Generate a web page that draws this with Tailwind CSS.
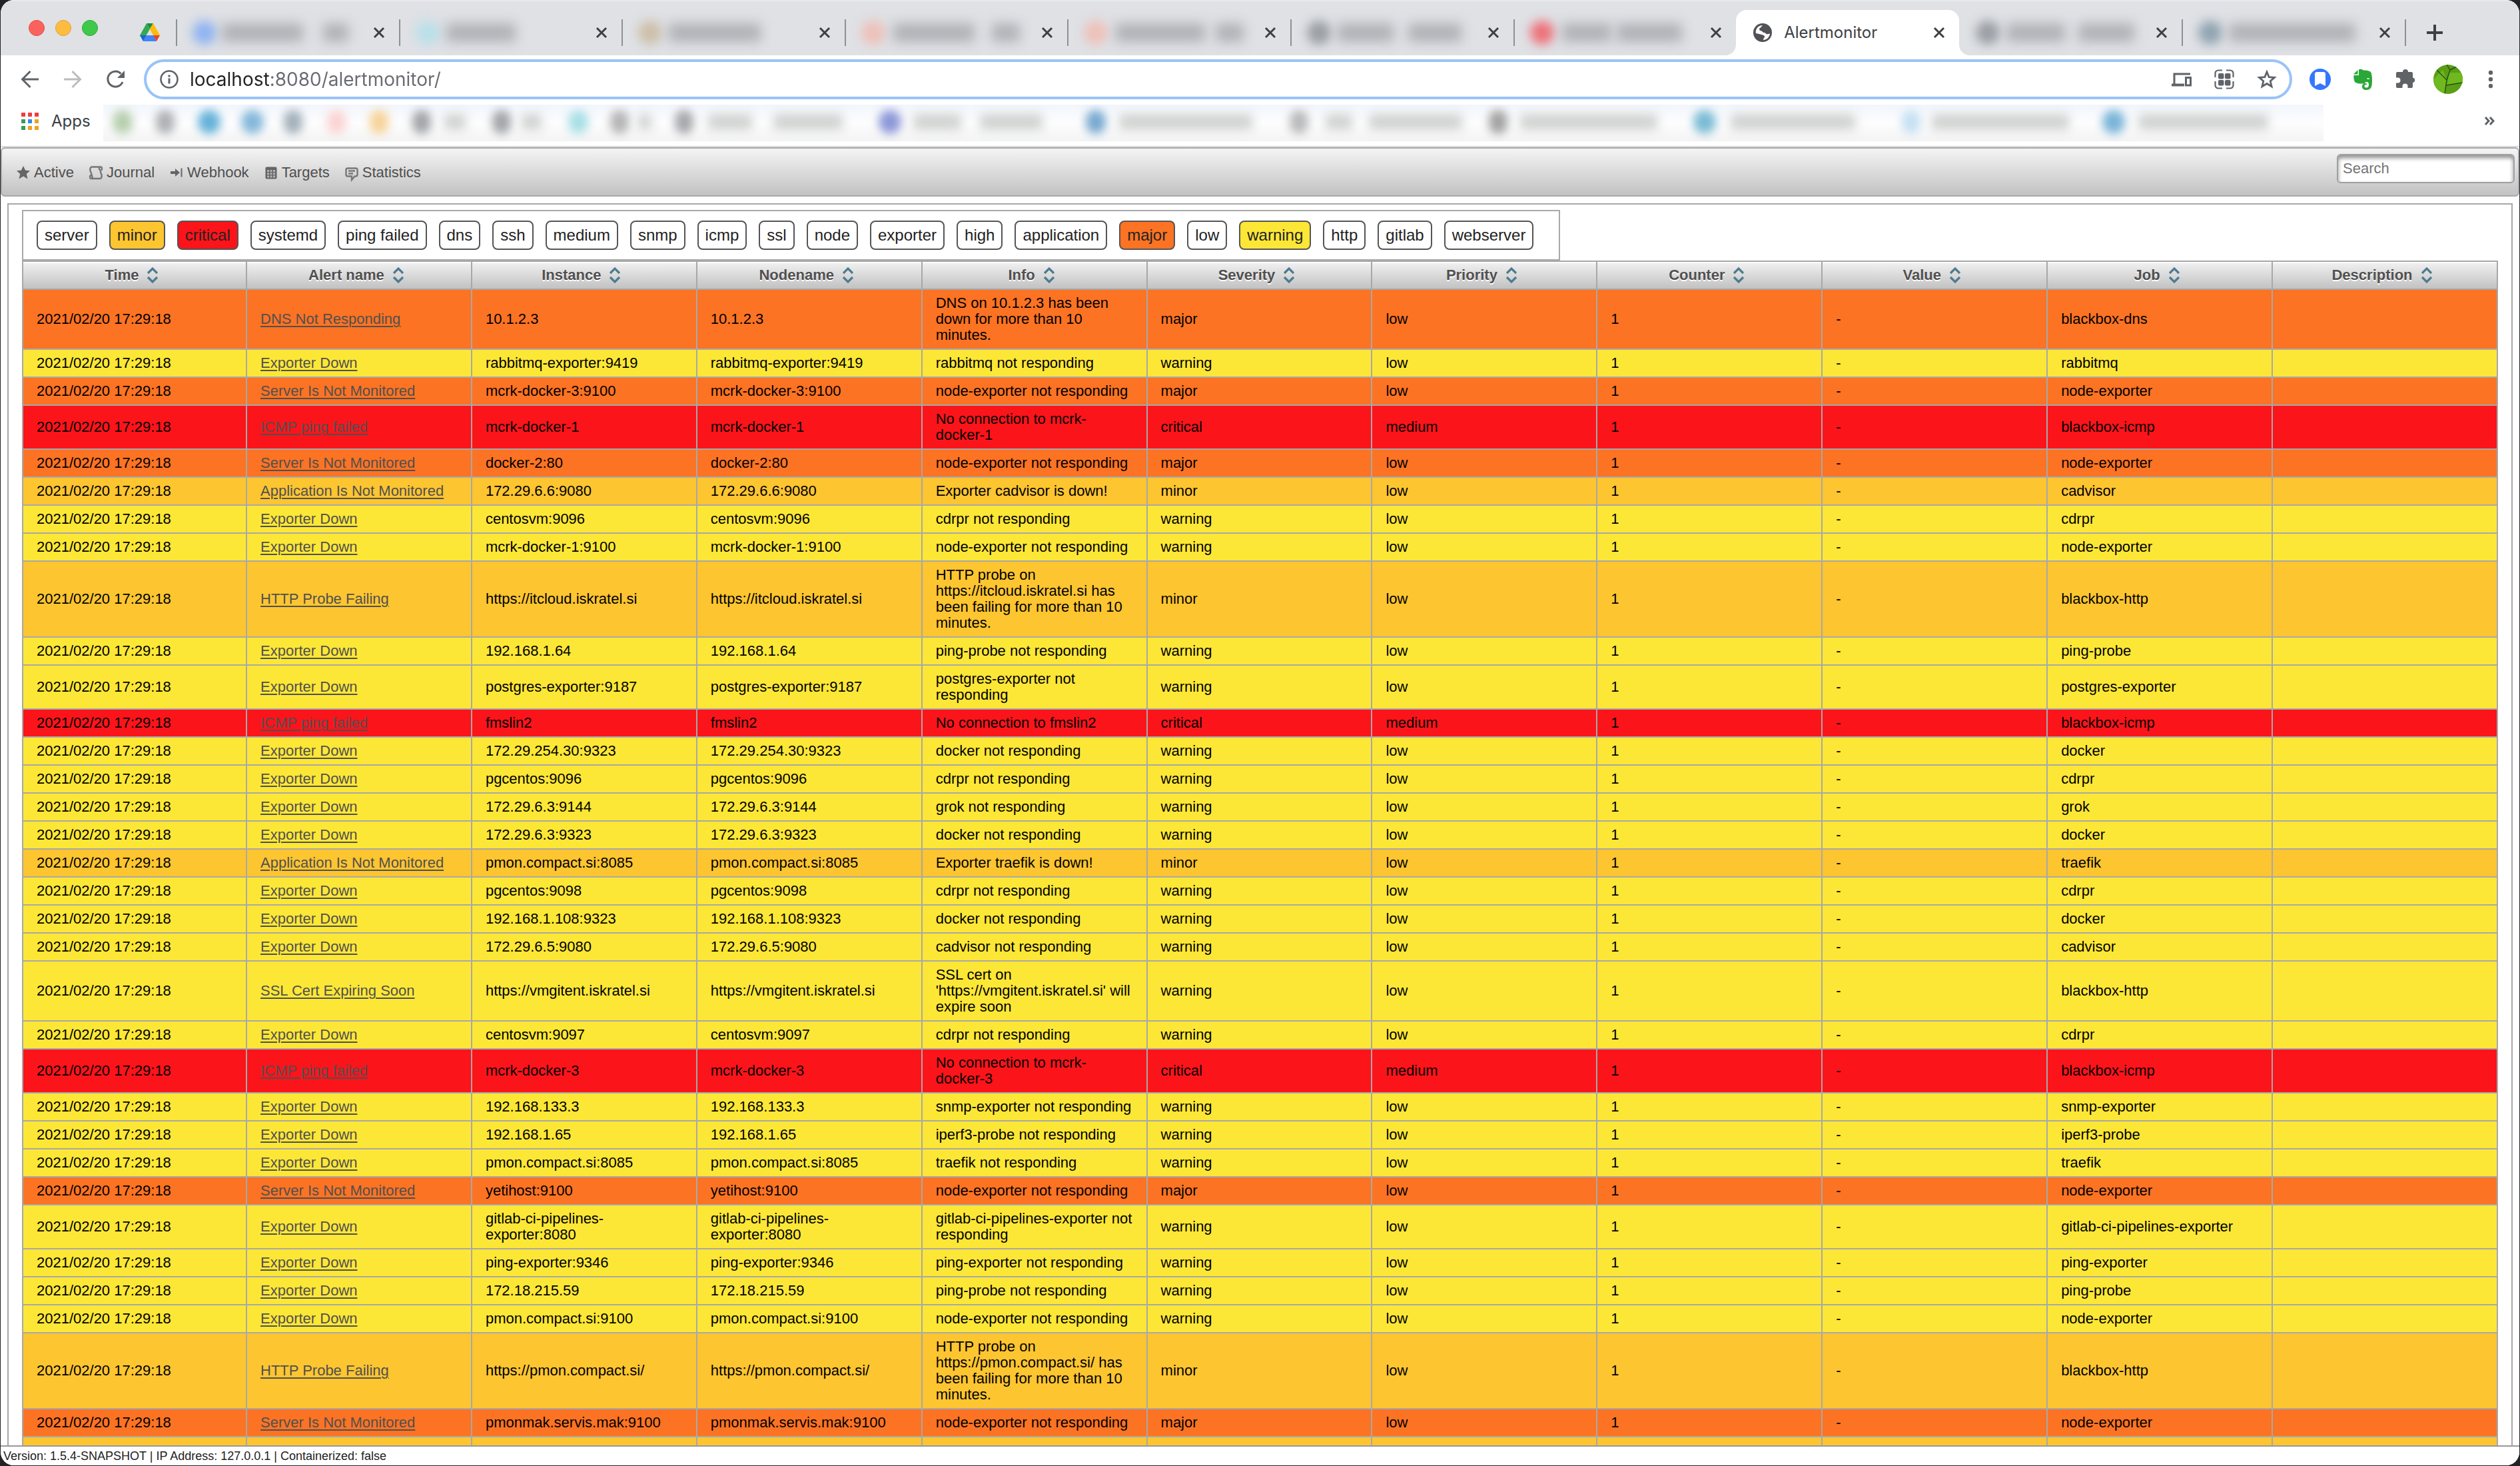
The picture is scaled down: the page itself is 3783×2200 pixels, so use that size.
<!DOCTYPE html>
<html lang="en">
<head>
<meta charset="utf-8">
<title>Alertmonitor</title>
<script src="https://cdn.jsdelivr.net/npm/@tailwindcss/browser@4"></script>
</head>
<body class="bg-[#222326]">
<svg class="hidden">
  <symbol id="close" viewBox="0 0 18 18"><path d="M2 2l14 14M16 2L2 16" stroke="#3c4043" stroke-width="3" fill="none"/></symbol>
  <symbol id="sort" viewBox="0 0 18 24"><path d="M2 9l7-7 7 7M2 15l7 7 7-7" stroke="#4f7b91" stroke-width="3.2" fill="none"/></symbol>
</svg>
<div class="ml-px mr-px flex h-[calc(100vh-1px)] flex-col overflow-hidden rounded-[20px] bg-white font-['Liberation_Sans',Arial,sans-serif] text-[22px] leading-6 text-black">

  <!-- Tab strip -->
  <header class="flex h-[83px] shrink-0 items-end border-t-2 border-[#e8eaed] bg-[#dfe1e5] font-[Inter,sans-serif]">
    <div class="flex w-[263px] shrink-0 self-start pl-[42px]">
      <div class="mt-7 flex gap-4">
        <span class="size-6 rounded-full border border-[#e24b41] bg-[#fc625d]"></span>
        <span class="size-6 rounded-full border border-[#dfa13a] bg-[#fdbc40]"></span>
        <span class="size-6 rounded-full border border-[#2bab2f] bg-[#3fc84a]"></span>
      </div>
      <svg class="mt-8 ml-[63px] h-7 w-[30px]" viewBox="0 0 30 28">
        <path d="M10 1h10l-5 8.500z" fill="#1e8e3e"/>
        <path d="M10 1l5 8.500L5 27 0 19z" fill="#34a853"/>
        <path d="M20 1l10 18H20l-5-9.500z" fill="#fbbc04"/>
        <path d="M0 19h10l-5 9z" fill="#1967d2"/>
        <path d="M9.500 19h11L25 28H5z" fill="#4285f4"/>
        <path d="M20 19h10l-5 9z" fill="#ea4335"/>
      </svg>
    </div>
    <div id="tabs" class="grid flex-1 grid-cols-10"></div>
    <div class="flex h-17 w-[172px] shrink-0 items-center">
      <span class="h-10 w-0.5 bg-[#8d9094]"></span>
      <button type="button" aria-label="New tab" class="ml-[31px]"><svg class="size-6" viewBox="0 0 24 24"><path d="M12 0v24M0 12h24" stroke="#3c4043" stroke-width="4"/></svg></button>
    </div>
  </header>

  <!-- Address bar -->
  <div class="flex h-18 shrink-0 items-center pr-[27px] pl-7 font-[Inter,sans-serif]">
    <div class="flex gap-8">
      <button type="button" aria-label="Back"><svg class="size-8" viewBox="0 0 32 32" fill="none" stroke="#5f6368" stroke-width="3"><path d="M29 16H5M16.500 4L4.500 16l12 12"/></svg></button>
      <button type="button" aria-label="Forward"><svg class="size-8" viewBox="0 0 32 32" fill="none" stroke="#babcbe" stroke-width="3"><path d="M3 16h24M15.500 4l12 12-12 12"/></svg></button>
      <button type="button" aria-label="Reload"><svg class="size-8" viewBox="0 0 32 32" fill="none"><path d="M24.500 7.500A11.500 11.500 0 1 0 27 20" stroke="#5f6368" stroke-width="3"/><path d="M30 3v11H19z" fill="#5f6368"/></svg></button>
    </div>
    <div class="ml-[27px] flex h-15 flex-1 items-center rounded-full border-4 border-[#99c3f9] pr-[18px] pl-5">
      <svg class="size-7" viewBox="0 0 28 28"><circle cx="14" cy="14" r="12.500" fill="none" stroke="#5f6368" stroke-width="2.600"/><path d="M14 12.500v8M14 7.500v3" stroke="#5f6368" stroke-width="3"/></svg>
      <input type="text" aria-label="Address" value="localhost:8080/alertmonitor/" class="ml-[17px] h-10 flex-1 bg-[linear-gradient(90deg,#202124_121px,#686b6f_121px)] bg-clip-text text-[28px] text-transparent outline-none">
      <div class="flex gap-8">
        <svg class="size-8" viewBox="0 0 32 32" fill="none" stroke="#5f6368" stroke-width="3"><path d="M5 24V8h24"/><path d="M1 24.500h19" stroke-width="4"/><rect x="22.500" y="13.500" width="7" height="11.500"/></svg>
        <svg class="size-8" viewBox="0 0 32 32" fill="none" stroke="#5f6368" stroke-width="2.200"><path d="M13 2.500H7A4.500 4.500 0 0 0 2.500 7v6M19 2.500h6A4.500 4.500 0 0 1 29.500 7v6M13 29.500H7A4.500 4.500 0 0 1 2.500 25v-6M19 29.500h6a4.500 4.500 0 0 0 4.500-4.500v-6"/><g fill="#5f6368" stroke="none"><rect x="7" y="7" width="8.500" height="8.500" rx="2"/><rect x="17" y="7" width="8.500" height="8.500" rx="2"/><rect x="7" y="17" width="8.500" height="8.500" rx="2"/><rect x="17" y="17" width="8.500" height="8.500" rx="2"/></g></svg>
        <svg class="size-8" viewBox="0 0 32 32" fill="none" stroke="#5f6368" stroke-width="2.800"><path d="M16 5l3.200 7.700 8.200.700-6.200 5.400 1.900 8-7.100-4.300-7.100 4.300 1.900-8L4.600 13.400l8.200-.700z"/></svg>
      </div>
    </div>
    <div class="ml-[26px] flex items-center">
      <svg class="size-8" viewBox="0 0 32 32"><circle cx="16" cy="16" r="16" fill="#3377ff"/><path d="M8 8q0-3 3-3h10q3 0 3 3v18l-8-4-8 4z" fill="#fff"/></svg>
      <svg class="ml-8 size-8" viewBox="0 0 32 32"><path d="M2.500 10h7.500V1.500C11 0 15 .500 17 2.500c4 0 9 .500 11 2.500 2 4 2.500 12 1.500 20-.700 4.500-3.500 7-8 7-4 0-6.500-2-6.500-5s2-5 5-5c1.500 0 2.500.500 2.500 2-3-.500-4 .500-4 2.500 0 1.500 1 2 3 2 2.500 0 3.500-1.500 3.500-4.500 0-2.500-1-4-3-4-2 0-3 2-5 2.500C11 23 5 22 3.500 19 2.500 16 2 13 2.500 10z" fill="#2aa737"/><path d="M2 8.500L8.500 2v6.500z" fill="#2aa737"/><path d="M22 15.500c1-2 3.500-2 4 .500z" fill="#fff"/></svg>
      <svg class="ml-8 size-8" viewBox="0 0 32 32"><path d="M13 6a4 4 0 0 1 8 0h5q2 0 2 2v6.500a3.800 3.800 0 0 1 0 7.500v6q0 2-2 2h-5.500v-2.500a4 4 0 0 0-8 0V30H5q-2 0-2-2v-5.500h2.500a4 4 0 0 0 0-8H3V8q0-2 2-2z" transform="translate(-1 -1)" fill="#5f6368"/></svg>
      <svg class="ml-[26px] size-11 rounded-full" viewBox="0 0 44 44"><rect width="44" height="44" fill="#5a9e17"/><path d="M0 22L14 8l6 15-3 21H0zM24 12l20 0v16l-24 3z" fill="#6fb81f"/><path d="M20 0l5 8-5 15-3 21M5 8l15 15M25 8l12-6M19 31l25-4" stroke="#23520c" stroke-width="1.400" fill="none"/></svg>
      <button type="button" aria-label="Menu" class="ml-[26px]"><svg class="size-8" viewBox="0 0 32 32" fill="#5f6368"><circle cx="16" cy="6" r="3.200"/><circle cx="16" cy="16" r="3.200"/><circle cx="16" cy="26" r="3.200"/></svg></button>
    </div>
  </div>

  <!-- Bookmarks bar -->
  <div class="flex h-16 shrink-0 items-center pb-[10px] pl-[31px] font-[Inter,sans-serif]">
    <svg class="h-7 w-[26px]" viewBox="0 0 26 28"><g fill="#f23c3c"><path d="M0 1h6v6H0zM10 1h6v6h-6zM20 1h6v6h-6z"/></g><g fill="#3c9a57"><path d="M0 11h6v6H0zM0 21h6v6H0z"/></g><path d="M10 11h6v6h-6z" fill="#2b8cf2"/><g fill="#f0a026"><path d="M20 11h6v6h-6zM10 21h6v6h-6zM20 21h6v6h-6z"/></g></svg>
    <a href="#apps" class="ml-[19px] w-[78px] text-[24px] text-[#3c4043]">Apps</a>
    <div id="bookmarks" class="mt-[5px] flex h-[55px] w-[3333px] min-w-0 shrink items-center overflow-hidden bg-linear-to-b from-[#f2f6fc] via-[#fdfdfe] to-[#f4f4f4] pb-1"></div>
    <button type="button" aria-label="More bookmarks" class="mr-[37px] ml-auto"><svg class="h-4 w-4" viewBox="0 0 16 16" fill="none" stroke="#5f6368" stroke-width="3"><path d="M2 2l5 5.500L2 13M9 2l5 5.500L9 13"/></svg></button>
  </div>

  <!-- Application menu -->
  <nav class="flex h-[76px] shrink-0 border-t-2 border-[#d8dadf]">
    <div class="flex flex-1 rounded-md border-2 border-[#a8a8a8] bg-linear-to-b from-[#f4f4f4] to-[#c2c2c2] pr-[5px] pl-4 text-[#4f4f4f]">
      <ul class="flex items-center gap-[17px] pt-0.5">
        <li><a href="#active" class="flex items-center"><svg class="size-8" viewBox="0 0 32 32" fill="#656467"><path d="M16 6l3 6.500 7 .800-5.200 4.700 1.700 7.500-6.500-4-6.500 4 1.700-7.500L6 13.300l7-.800z"/></svg>Active</a></li>
        <li><a href="#journal" class="flex items-center"><svg class="size-8" viewBox="0 0 32 32" fill="none" stroke="#777679" stroke-width="2.400"><path d="M10 7.500h13q2 0 2 2.500t-2.500 2.500q0 2.500 1.500 5.500t0 6q-.500 1-2 1H9q-2 0-2-2.500T9.500 20q0-3-1.500-5.500t0-6q.500-1 2-1z"/><path d="M21 8v4M10 20l1 5"/></svg>Journal</a></li>
        <li><a href="#webhook" class="flex items-center"><svg class="size-8" viewBox="0 0 32 32"><path d="M7 14h7v-4l7 6-7 6v-4H7z" fill="#656467"/><path d="M23.500 9.500v13" stroke="#656467" stroke-width="2"/></svg>Webhook</a></li>
        <li><a href="#targets" class="flex items-center"><svg class="size-8" viewBox="0 0 32 32"><rect x="7.500" y="7.500" width="17" height="18" rx="2" fill="#656467"/><path d="M10 12h3v3h-3zM14.500 12h3v3h-3zM19 12h3v3h-3zM10 16.200h3v3h-3zM14.500 16.200h3v3h-3zM19 16.200h3v3h-3zM10 20.400h3v3h-3zM14.500 20.400h3v3h-3zM19 20.400h3v3h-3z" fill="#b3b3b3"/></svg>Targets</a></li>
        <li><a href="#statistics" class="flex items-center"><svg class="size-8" viewBox="0 0 32 32" fill="none" stroke="#777679" stroke-width="2.400"><path d="M10 9.500h12q2.500 0 2.500 2.500v7q0 2.500-2.500 2.500h-1.500L16 27v-5.500h-6q-2.500 0-2.500-2.500v-7q0-2.500 2.500-2.500zM11 13.500h10M11 17.500h7"/></svg>Statistics</a></li>
      </ul>
      <input type="search" placeholder="Search" aria-label="Search" class="mt-2 ml-auto h-11 w-[267px] rounded-md border-2 border-[#a0a0a0] bg-white px-[7px] shadow-[inset_0_4px_6px_#8d8d8d] placeholder:text-[#757575]">
    </div>
  </nav>

  <!-- Alerts -->
  <main class="min-h-0 flex-1 overflow-hidden px-[10px] pt-[10px]">
    <div class="border-2 border-[#a8a8a8] px-5 pt-2 pb-5">
      <div id="filters" class="flex h-19 w-fit items-center gap-[18px] border-2 border-[#a8a8a8] pr-[38px] pl-5 text-[24px] text-[#222]"></div>
      <table class="w-full table-fixed border-collapse">
        <colgroup><col class="w-[336px]"><col span="10"></colgroup>
        <thead><tr id="head"></tr></thead>
        <tbody id="rows"></tbody>
      </table>
    </div>
  </main>

  <footer class="shrink-0 border-t-2 border-[#999] bg-white pt-0.5 pb-0.5 pl-1 text-[18px] leading-6 text-[#222]">Version: 1.5.4-SNAPSHOT | IP Address: 127.0.0.1 | Containerized: false</footer>
</div>

<script>
const $ = id => document.getElementById(id);

// Browser tabs: favicon colour, then [gap, width] of each word of the obscured title.
const tabs = [
  ['#8fb3f2', [[12, 118], [34, 34]]], ['#b9dfe9', [[14, 100]]], ['#cdbfa9', [[14, 134]]],
  ['#eec0b8', [[16, 118], [30, 38]]], ['#eec0b8', [[16, 130], [20, 38]]], ['#9a9ea4', [[14, 80], [26, 76]]],
  ['#ee7078', [[16, 70], [12, 94]]], null, ['#9a9ea4', [[14, 84], [24, 80]]], ['#8fa3b0', [[14, 186]]],
];
$('tabs').innerHTML = tabs.map((t, i) => {
  const close = '<button type="button" aria-label="Close tab" class="mr-[21px] ml-auto shrink-0"><svg class="size-[18px]"><use href="#close"/></svg></button>';
  if (!t) return `<div class="relative flex h-17 items-center rounded-t-2xl bg-white pl-[26px]">
    <svg class="absolute bottom-0 -left-4 size-4" viewBox="0 0 16 16"><path d="M16 0v16H0A16 16 0 0 0 16 0z" fill="#fff"/></svg>
    <svg class="absolute -right-4 bottom-0 size-4" viewBox="0 0 16 16"><path d="M0 0v16h16A16 16 0 0 1 0 0z" fill="#fff"/></svg>
    <svg class="size-7" viewBox="0 0 28 28"><circle cx="14" cy="14" r="14" fill="#505257"/><path d="M15 3c-3 0-2 3-5 4-2 1-1 3 1 3 3 0 3 2 5 3 3 1 2 4 6 3 2 0 3-1 3 0-1 5-5 9-10 9 0-3 2-3 2-5s-2-2-4-3c-3-1-5-1-9-2-1-4 1-12 11-12z" fill="#fff"/><path d="M15 4c3 0 5 1 7 3-1 2-3 1-4 3s1 3-1 4-4-3-6-3-2-1 0-3 2-3 4-4z" fill="#505257"/></svg>
    <span class="ml-[18px] text-[24px] text-[#3c4043]">Alertmonitor</span>${close}</div>`;
  const sep = i === 8 ? 'bg-transparent' : 'bg-[#8d9094]';
  return `<div class="flex h-17 min-w-0 items-center"><span class="h-10 w-0.5 shrink-0 ${sep}"></span>
    <span class="ml-[23px] size-9 shrink-0 rounded-full blur-[8px]" style="background:${t[0]}"></span>
    ${t[1].map(([g, w]) => `<span class="h-7 rounded bg-[#b0b2b6] blur-[9px]" style="margin-left:${g - 4}px;width:${w + 4}px"></span>`).join('')}${close}</div>`;
}).join('');

// Obscured bookmarks: [start, width, colour]; entries without a colour are titles.
const marks = [[14,30,'#b7cfae'],[79,28,'#aeb0b3'],[142,34,'#65b2d9'],[207,34,'#85b8da'],[271,28,'#a3b0ba'],[336,28,'#fbd3d3'],[400,28,'#f6d398'],[464,28,'#a2a5a9'],[512,32],[584,28,'#a2a5a9'],[628,30],[698,30,'#a9dfe6'],[761,28,'#b5b5b5'],[803,20],[858,28,'#a8a8ac'],[908,66],[1006,104],[1164,34,'#8d98d8'],[1216,72],[1316,94],[1475,30,'#78a9cf'],[1525,200],[1781,28,'#bababa'],[1835,40],[1900,140],[2080,28,'#a3a3a3'],[2127,206],[2387,34,'#7bbcd4'],[2443,187],[2700,28,'#c6e0f3'],[2745,206],[3001,34,'#7ab4d8'],[3055,195]];
let edge = 0;
$('bookmarks').innerHTML = marks.map(([x, w, c]) => {
  const gap = x - edge; edge = x + w;
  return c ? `<span class="h-9 shrink-0 rounded-full blur-[7px]" style="margin-left:${gap}px;width:${w}px;background:${c}"></span>`
           : `<span class="h-6 shrink-0 rounded bg-[#cfd2d0] blur-[8px]" style="margin-left:${gap}px;width:${w}px"></span>`;
}).join('');

const fill = { minor: 'bg-[#fdc530]', critical: 'bg-[#fb141a]', major: 'bg-[#fc7323]', warning: 'bg-[#fde736]' };
$('filters').innerHTML = ['server','minor','critical','systemd','ping failed','dns','ssh','medium','snmp','icmp','ssl','node','exporter','high','application','major','low','warning','http','gitlab','webserver']
  .map(f => `<button type="button" class="h-11 rounded-lg border-2 border-[#555] px-[10px] ${fill[f] || 'bg-white'}">${f}</button>`).join('');

$('head').innerHTML = ['Time','Alert name','Instance','Nodename','Info','Severity','Priority','Counter','Value','Job','Description']
  .map(h => `<th scope="col" class="h-[42px] border-2 border-[#a8a8a8] bg-linear-to-b from-[#f2f2f2] to-[#c2c2c2] text-[#505050] shadow-[inset_0_2px_white] [text-shadow:0_2px_0_white]"><span class="flex items-center justify-center gap-3 pr-2">${h}<svg class="h-6 w-[18px]"><use href="#sort"/></svg></span></th>`).join('');

const E = 'Exporter Down', S = 'Server Is Not Monitored', A = 'Application Is Not Monitored', I = 'ICMP ping failed', H = 'HTTP Probe Failing';
// [alert, instance, info, severity, job]
const alerts = [
  ['DNS Not Responding','10.1.2.3','DNS on 10.1.2.3 has been down for more than 10 minutes.','major','blackbox-dns'],
  [E,'rabbitmq-exporter:9419','rabbitmq not responding','warning','rabbitmq'],
  [S,'mcrk-docker-3:9100','node-exporter not responding','major','node-exporter'],
  [I,'mcrk-docker-1','No connection to mcrk-docker-1','critical','blackbox-icmp'],
  [S,'docker-2:80','node-exporter not responding','major','node-exporter'],
  [A,'172.29.6.6:9080','Exporter cadvisor is down!','minor','cadvisor'],
  [E,'centosvm:9096','cdrpr not responding','warning','cdrpr'],
  [E,'mcrk-docker-1:9100','node-exporter not responding','warning','node-exporter'],
  [H,'https://itcloud.iskratel.si','HTTP probe on https://itcloud.iskratel.si has been failing for more than 10 minutes.','minor','blackbox-http'],
  [E,'192.168.1.64','ping-probe not responding','warning','ping-probe'],
  [E,'postgres-exporter:9187','postgres-exporter not responding','warning','postgres-exporter'],
  [I,'fmslin2','No connection to fmslin2','critical','blackbox-icmp'],
  [E,'172.29.254.30:9323','docker not responding','warning','docker'],
  [E,'pgcentos:9096','cdrpr not responding','warning','cdrpr'],
  [E,'172.29.6.3:9144','grok not responding','warning','grok'],
  [E,'172.29.6.3:9323','docker not responding','warning','docker'],
  [A,'pmon.compact.si:8085','Exporter traefik is down!','minor','traefik'],
  [E,'pgcentos:9098','cdrpr not responding','warning','cdrpr'],
  [E,'192.168.1.108:9323','docker not responding','warning','docker'],
  [E,'172.29.6.5:9080','cadvisor not responding','warning','cadvisor'],
  ['SSL Cert Expiring Soon','https://vmgitent.iskratel.si',"SSL cert on 'https://vmgitent.iskratel.si' will expire soon",'warning','blackbox-http'],
  [E,'centosvm:9097','cdrpr not responding','warning','cdrpr'],
  [I,'mcrk-docker-3','No connection to mcrk-docker-3','critical','blackbox-icmp'],
  [E,'192.168.133.3','snmp-exporter not responding','warning','snmp-exporter'],
  [E,'192.168.1.65','iperf3-probe not responding','warning','iperf3-probe'],
  [E,'pmon.compact.si:8085','traefik not responding','warning','traefik'],
  [S,'yetihost:9100','node-exporter not responding','major','node-exporter'],
  [E,'gitlab-ci-pipelines-exporter:8080','gitlab-ci-pipelines-exporter not responding','warning','gitlab-ci-pipelines-exporter'],
  [E,'ping-exporter:9346','ping-exporter not responding','warning','ping-exporter'],
  [E,'172.18.215.59','ping-probe not responding','warning','ping-probe'],
  [E,'pmon.compact.si:9100','node-exporter not responding','warning','node-exporter'],
  [H,'https://pmon.compact.si/','HTTP probe on https://pmon.compact.si/ has been failing for more than 10 minutes.','minor','blackbox-http'],
  [S,'pmonmak.servis.mak:9100','node-exporter not responding','major','node-exporter'],
  ['','','','minor',''],
];
$('rows').innerHTML = alerts.map(([name, host, info, sev, job]) => {
  const cells = name
    ? ['2021/02/20 17:29:18', `<a href="#alert" class="text-[#505050] underline decoration-2 underline-offset-[3px]">${name}</a>`, host, host, info, sev, sev === 'critical' ? 'medium' : 'low', '1', '-', job, '']
    : Array(11).fill('');
  return `<tr class="h-[42px] ${fill[sev]}">${cells.map(c => `<td class="border-2 border-[#a8a8a8] py-2 pr-[19px] pl-5">${c}</td>`).join('')}</tr>`;
}).join('');
</script>
</body>
</html>
